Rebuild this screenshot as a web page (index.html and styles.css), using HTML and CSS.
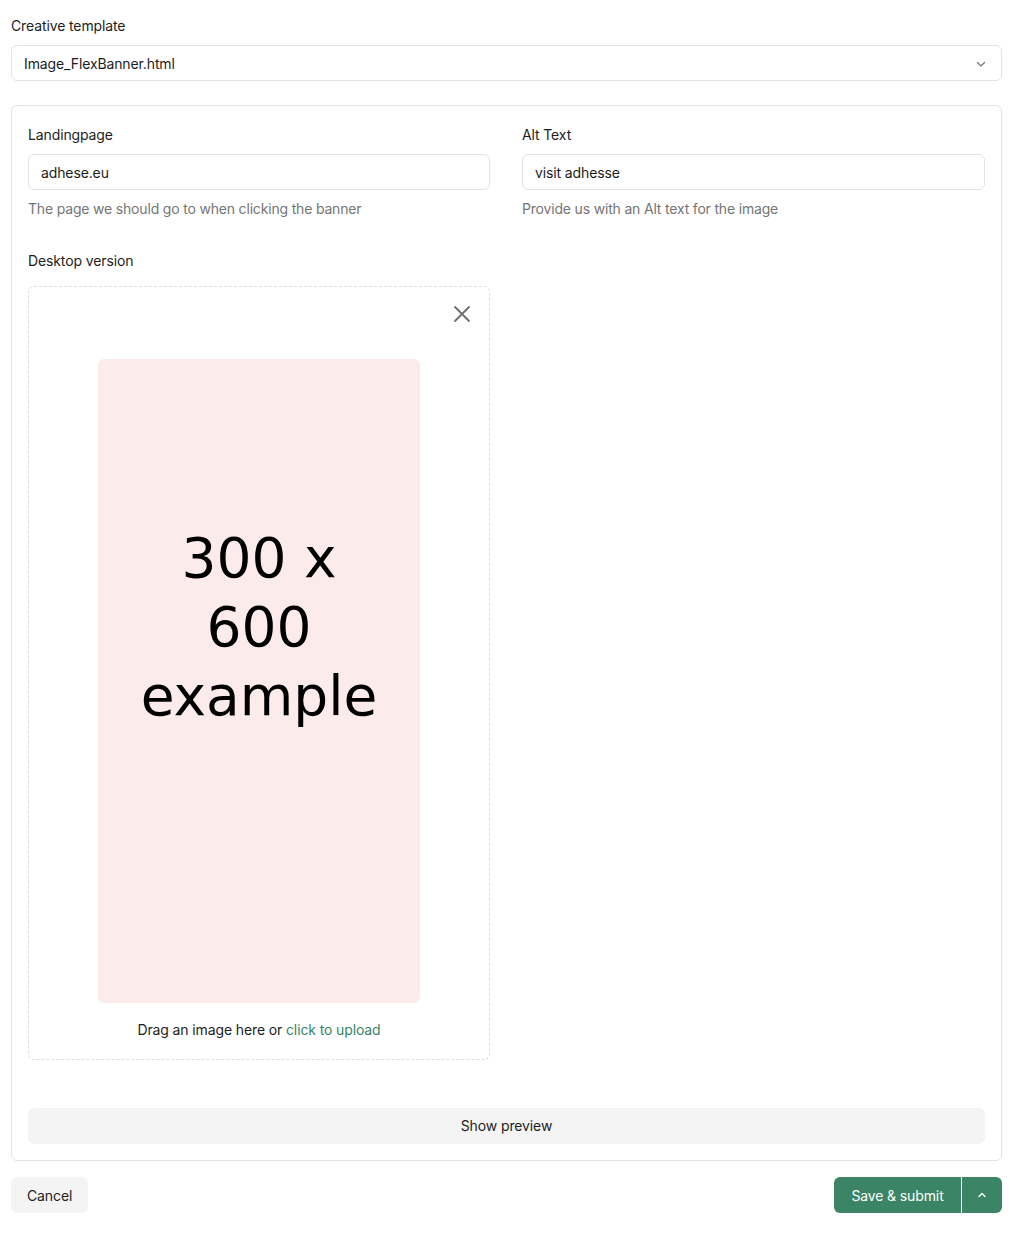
FILE: index.html
```html
<!DOCTYPE html>
<html>
<head>
<meta charset="utf-8">
<link rel="stylesheet" href="styles.css">
</head>
<body>
<div class="page">
  <div class="field">
    <label class="label">Creative template</label>
    <div class="select">
      <span>Image_FlexBanner.html</span>
      <svg class="chev" width="12" height="12" viewBox="0 0 12 12"><path d="M2.5 4.5 L6 8 L9.5 4.5" fill="none" stroke="#777" stroke-width="1.3" stroke-linecap="round" stroke-linejoin="round"/></svg>
    </div>
  </div>

  <div class="card">
    <div class="cols">
      <div class="field">
        <label class="label">Landingpage</label>
        <div class="input">adhese.eu</div>
        <div class="help">The page we should go to when clicking the banner</div>
      </div>
      <div class="field">
        <label class="label">Alt Text</label>
        <div class="input">visit adhesse</div>
        <div class="help">Provide us with an Alt text for the image</div>
      </div>
    </div>

    <div class="cols desktop">
      <div class="field">
        <label class="label label-dz">Desktop version</label>
        <div class="dropzone">
          <svg class="close" width="18" height="18" viewBox="0 0 18 18"><path d="M2 2 L16 16 M16 2 L2 16" stroke="#6e6e6e" stroke-width="1.8" stroke-linecap="round"/></svg>
          <div class="banner">
            <span>300 x<br>600<br>example</span>
          </div>
          <div class="dz-text">Drag an image here or <span class="link">click to upload</span></div>
        </div>
      </div>
      <div></div>
    </div>

    <button class="preview">Show preview</button>
  </div>

  <div class="actions">
    <button class="cancel">Cancel</button>
    <div class="split">
      <button class="save">Save &amp; submit</button>
      <button class="more"><svg width="12" height="12" viewBox="0 0 12 12"><path d="M3 7.5 L6 4.5 L9 7.5" fill="none" stroke="#fff" stroke-width="1.4" stroke-linecap="round" stroke-linejoin="round"/></svg></button>
    </div>
  </div>
</div>
</body>
</html>
```
FILE: styles.css
```css
* { box-sizing: border-box; }
html, body { margin: 0; padding: 0; background: #fff; }
body {
  font-family: Inter, "Noto Sans", "Liberation Sans", sans-serif;
  font-size: 14px;
  line-height: 20px;
  letter-spacing: -0.12px;
  color: #1d1d1d;
}
.page { padding: 16px 8px 20px 11px; width: 1010px; }
.field { display: flex; flex-direction: column; }
.label { display: block; margin-bottom: 9px; color: #1d1d1d; }
.select, .input {
  height: 36px;
  border: 1px solid #e3e3e3;
  border-radius: 6px;
  display: flex;
  align-items: center;
  padding: 1px 12px 0 12px;
  background: #fff;
  color: #1d1d1d;
}
.select { justify-content: space-between; padding-right: 14px; }
.chev { display: block; }
.card {
  margin-top: 24px;
  border: 1px solid #e3e3e3;
  border-radius: 6px;
  padding: 19px 16px 16px 16px;
}
.cols {
  display: grid;
  grid-template-columns: 462px 463px;
  column-gap: 32px;
}
.help { margin-top: 9px; color: #757575; letter-spacing: -0.18px; }
.desktop { margin-top: 32px; }
.label-dz { margin-bottom: 15px; }
.dropzone {
  position: relative;
  height: 774px;
  border: 1px dashed #dedede;
  border-radius: 6px;
  padding-top: 72px;
  display: flex;
  flex-direction: column;
  align-items: center;
}
.close { position: absolute; top: 18px; right: 18px; }
.banner {
  width: 322px;
  height: 644px;
  background: #fbeceb;
  border-radius: 6px;
  padding-top: 165px;
  text-align: center;
  font-family: "DejaVu Sans", sans-serif;
  font-size: 55px;
  line-height: 69px;
  letter-spacing: 0;
  color: #000;
}
.dz-text { margin-top: 17px; color: #1d1d1d; }
.link { color: #3a8466; }
button {
  font-family: inherit;
  font-size: 14px;
  line-height: 20px;
  letter-spacing: -0.12px;
  border: none;
  cursor: pointer;
  padding-top: 1px;
}
.preview {
  display: block;
  width: 100%;
  margin-top: 48px;
  height: 36px;
  background: #f4f4f4;
  border-radius: 6px;
  color: #1d1d1d;
}
.actions {
  margin-top: 16px;
  display: flex;
  justify-content: space-between;
  width: 991px;
}
.cancel {
  height: 36px;
  padding: 1px 16px 0 16px;
  background: #f4f4f4;
  border-radius: 6px;
  color: #1d1d1d;
}
.split { display: flex; }
.save, .more {
  height: 36px;
  background: #3b8466;
  color: #fff;
}
.save { padding: 1px 16px 0 16px; border-radius: 6px 0 0 6px; width: 127px; }
.more {
  width: 41px;
  border-left: 1px solid #fff;
  border-radius: 0 6px 6px 0;
  display: flex;
  align-items: center;
  justify-content: center;
}
```
